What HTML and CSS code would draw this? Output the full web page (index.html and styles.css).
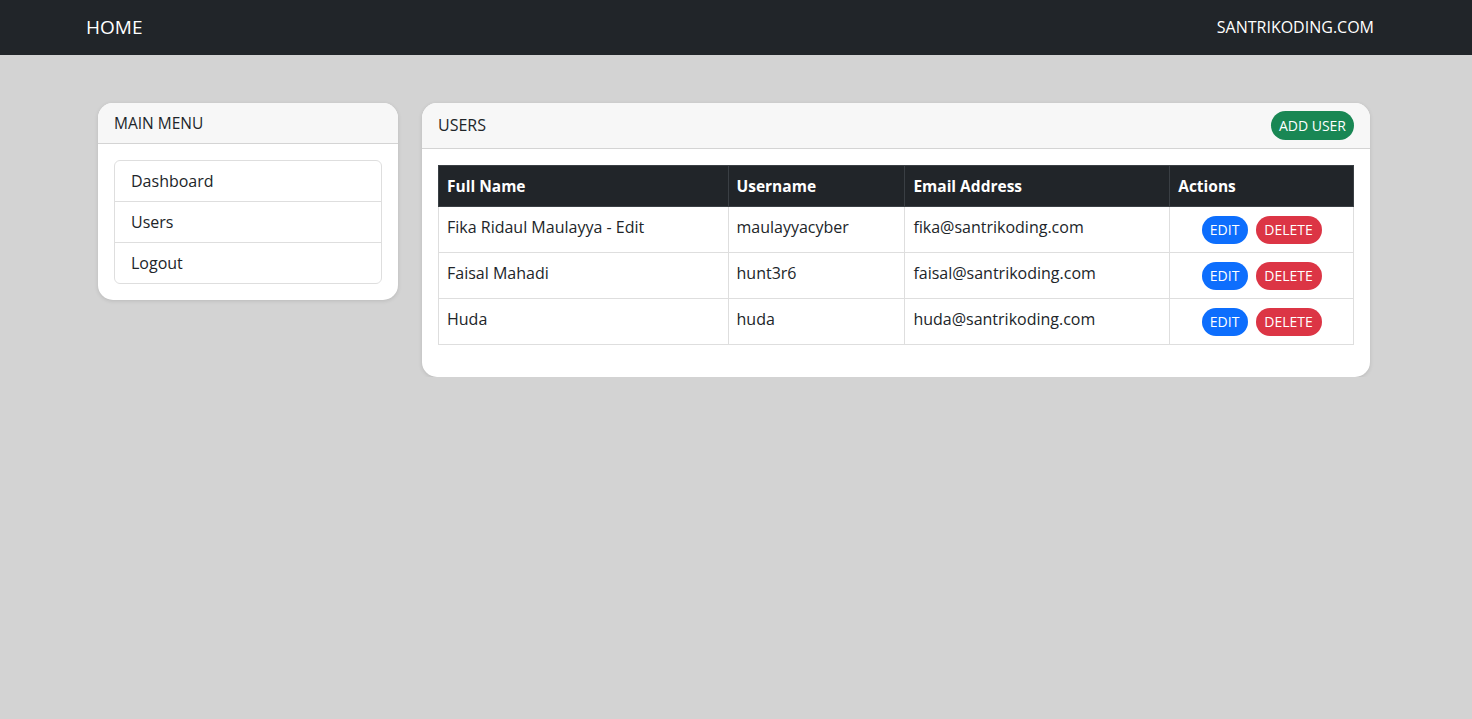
FILE: index.html
```html
<!DOCTYPE html>
<html lang="en">
<head>
<meta charset="utf-8">
<title>Users</title>
<link rel="stylesheet" href="styles.css">
</head>
<body>
<nav class="navbar">
  <div class="nav-inner">
    <a class="brand" href="#">HOME</a>
    <a class="nav-link" href="#">SANTRIKODING.COM</a>
  </div>
</nav>
<main class="layout">
  <aside class="card side">
    <div class="card-header">MAIN MENU</div>
    <div class="card-body">
      <ul class="list">
        <li>Dashboard</li>
        <li>Users</li>
        <li>Logout</li>
      </ul>
    </div>
  </aside>
  <section class="card content">
    <div class="card-header header-flex">
      <span>USERS</span>
      <a class="btn btn-green" href="#">ADD USER</a>
    </div>
    <div class="card-body">
      <table class="table">
        <colgroup>
          <col class="c1"><col class="c2"><col class="c3"><col class="c4">
        </colgroup>
        <thead>
          <tr><th>Full Name</th><th>Username</th><th>Email Address</th><th>Actions</th></tr>
        </thead>
        <tbody>
          <tr><td>Fika Ridaul Maulayya - Edit</td><td>maulayyacyber</td><td>fika@santrikoding.com</td><td class="actions"><a class="btn btn-blue" href="#">EDIT</a><a class="btn btn-red" href="#">DELETE</a></td></tr>
          <tr><td>Faisal Mahadi</td><td>hunt3r6</td><td>faisal@santrikoding.com</td><td class="actions"><a class="btn btn-blue" href="#">EDIT</a><a class="btn btn-red" href="#">DELETE</a></td></tr>
          <tr><td>Huda</td><td>huda</td><td>huda@santrikoding.com</td><td class="actions"><a class="btn btn-blue" href="#">EDIT</a><a class="btn btn-red" href="#">DELETE</a></td></tr>
        </tbody>
      </table>
    </div>
  </section>
</main>
</body>
</html>
```
FILE: styles.css
```css
* { box-sizing: border-box; }
html, body { margin: 0; padding: 0; }
body {
  background: #d3d3d3;
  font-family: "Open Sans", "Noto Sans", sans-serif;
  color: #212529;
  font-size: 16px;
}
a { text-decoration: none; }
.navbar {
  background: #212529;
  height: 55px;
}
.nav-inner {
  height: 55px;
  display: flex;
  align-items: center;
  justify-content: space-between;
  padding: 0 98px 2px 86px;
}
.brand { color: #fff; font-size: 19px; }
.nav-link { color: #fff; font-size: 16px; }

.layout {
  display: flex;
  align-items: flex-start;
  gap: 24px;
  margin: 48px 0 0 98px;
}
.card {
  background: #fff;
  border-radius: 15px;
  box-shadow: 0 1px 4px rgba(0,0,0,0.12);
  overflow: hidden;
}
.side { width: 300px; }
.content { width: 948px; }
.card-header {
  background: #f7f7f7;
  border-bottom: 1px solid #d4d4d4;
  padding: 0 16px 1px;
  height: 41px;
  display: flex;
  align-items: center;
  font-size: 15.5px;
  color: #212529;
}
.header-flex { justify-content: space-between; height: 46px; font-size: 16px; }
.card-body { padding: 16px; }
.list {
  list-style: none;
  margin: 0;
  padding: 0;
  border: 1px solid #dedede;
  border-radius: 6px;
}
.list li {
  height: 41px;
  display: flex;
  align-items: center;
  padding: 0 16px 1px;
  font-size: 16px;
  border-top: 1px solid #dedede;
}
.list li:first-child { border-top: none; height: 40px; }

.btn {
  display: inline-flex;
  align-items: center;
  justify-content: center;
  border-radius: 999px;
  color: #fff;
  font-size: 14px;
  height: 28px;
  padding: 0 8px;
}
.btn-green { background: #198754; height: 29px; font-size: 14px; padding: 0 8px; }
.btn-blue { background: #0d6efd; width: 46px; }
.btn-red { background: #dc3545; width: 66px; margin-left: 8px; }

.table {
  width: 916px;
  border-collapse: collapse;
  margin-bottom: 16px;
}
.c1 { width: 290px; }
.c2 { width: 177px; }
.c3 { width: 265px; }
.c4 { width: 184px; }
.table th, .table td {
  border: 1px solid #dedede;
  text-align: left;
  padding: 8px;
  font-size: 16px;
  vertical-align: top;
}
.table th {
  background: #212529;
  color: #fff;
  font-weight: 700;
  border-color: #3a3f44;
  height: 41px;
  vertical-align: middle;
  font-size: 15.5px;
}
.table td { height: 46px; padding-top: 9px; }
.table td.actions { text-align: center; vertical-align: middle; padding: 8px; }
```
